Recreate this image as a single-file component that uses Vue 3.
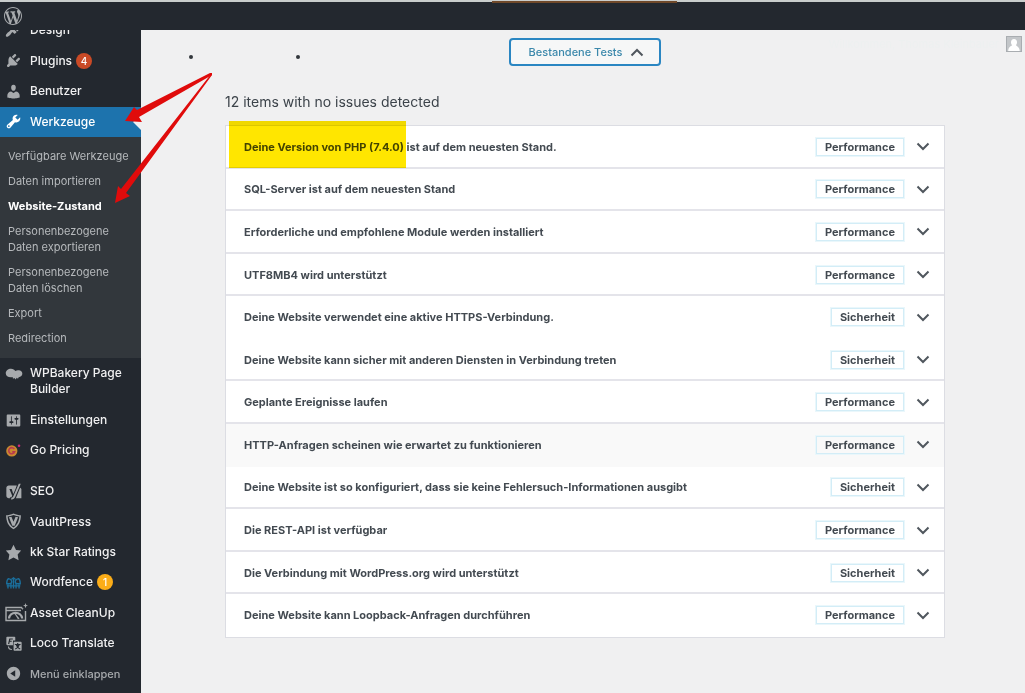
<template>
    <div class="admin">
        <header class="adminbar">
            <a href="#" class="wp-logo" aria-label="WordPress">
                <svg viewBox="0 0 20 20"><path :d="wpLogo" /></svg>
            </a>
        </header>

        <div class="body">
            <nav class="sidebar">
                <div class="menu">
                    <ul class="group group-core">
                        <li v-for="item in coreItems" :key="item.label" :class="{ current: item.current }">
                            <a href="#">
                                <svg class="icon" viewBox="0 0 20 20"><path :d="item.icon" /></svg>
                                <span>{{ item.label }}</span>
                                <span v-if="item.count" class="count">{{ item.count }}</span>
                            </a>
                        </li>
                    </ul>

                    <ul class="submenu">
                        <li v-for="entry in submenu" :key="entry">
                            <a href="#" :class="{ active: entry === 'Website-Zustand' }">{{ entry }}</a>
                        </li>
                    </ul>

                    <ul class="group group-settings">
                        <li class="two-lines">
                            <a href="#">
                                <svg class="icon wide" viewBox="0 0 20 20">
                                    <path d="M6.5 4.500C9 4.500 10.600 5.700 11.300 7.100 12.500 6.200 14 6.100 15.600 6.100c2.400 0 4.200 1.600 4.200 4s-1.800 4.100-4.300 4.200l-.8 1.900-1.500-1.200-1.300 2-1.400-1.600-1.700.8-.4-2c-.8.4-1.500.4-2.200.3C2.900 14.400.3 12.500.3 9.700.3 6.700 3 4.500 6.500 4.500z" />
                                </svg>
                                <span>WPBakery Page Builder</span>
                            </a>
                        </li>
                        <li>
                            <a href="#">
                                <svg class="icon" viewBox="0 0 20 20"><path :d="settingsIcon" /></svg>
                                <span>Einstellungen</span>
                            </a>
                        </li>
                        <li>
                            <a href="#">
                                <svg class="icon" viewBox="0 0 20 20">
                                    <circle cx="8" cy="10.500" r="6.600" fill="#c98a30" />
                                    <path d="M11 8.200A3.600 3.600 0 1 0 11.400 11.500H8.500" fill="none" stroke="#b83a4e" stroke-width="1.800" />
                                    <circle cx="16.500" cy="4.500" r="1.500" fill="#d0267a" />
                                </svg>
                                <span>Go Pricing</span>
                            </a>
                        </li>
                    </ul>

                    <ul class="group group-plugins">
                        <li>
                            <a href="#">
                                <svg class="icon wide" viewBox="0 0 20 20">
                                    <path d="M4 3h9.300L12 6.600 9.200 13 7.300 7H4.600l3.300 8c-.5 1.400-1.200 2-2.700 2v1H4c-1.700 0-3-1.300-3-3V6c0-1.700 1.300-3 3-3z" />
                                    <path d="M15.600 1h2.300L11.600 16c-.9 2.200-2.200 3.400-4.800 3.600v-2.200c1.500-.2 2.200-1 2.700-2.400z" />
                                    <path d="M17.200 5.500c.9.500 1.500 1.200 1.500 2.300V18H12.200z" />
                                </svg>
                                <span>SEO</span>
                            </a>
                        </li>
                        <li>
                            <a href="#">
                                <svg class="icon" viewBox="0 0 20 20">
                                    <path fill-rule="evenodd" d="M10 .5c3 1.500 6 2 8.700 2.100-.1 7-2.400 13-8.700 16.600C3.700 15.600 1.400 9.600 1.300 2.600 4 2.500 7 2 10 .5zM10 2.300C7.500 3.400 5.200 4 3.100 4.200 3.500 9.600 5.400 14.200 10 17.100c4.600-2.900 6.500-7.500 6.900-12.900C14.800 4 12.500 3.400 10 2.300z" />
                                    <path d="M4.600 5l3-.6L10 10.400l2.400-6 3 .6-4 10H8.600z" />
                                </svg>
                                <span>VaultPress</span>
                            </a>
                        </li>
                        <li>
                            <a href="#">
                                <svg class="icon" viewBox="0 0 20 20"><path d="M10 1l3 6 6 .75-4.120 4.620L16 19l-6-3-6 3 1.130-6.630L1 7.750 7 7z" /></svg>
                                <span>kk Star Ratings</span>
                            </a>
                        </li>
                        <li>
                            <a href="#">
                                <svg class="icon" viewBox="0 0 20 20">
                                    <g fill="none" stroke="#1b6f9c" stroke-width="1.600">
                                        <path d="M3.500 17V12M7 17V11M10 17V5M13 17V11M16.500 17V12" />
                                        <path d="M2 11.500c0-3 .5-5 2.200-6 2 .3 3.300 1.300 3.800 3 0 2-1.300 3-3 3zM18 11.500c0-3-.5-5-2.200-6-2 .3-3.300 1.300-3.800 3 0 2 1.300 3 3 3z" />
                                        <path d="M2 14h16M7.500 6.500L10 4.500l2.500 2" />
                                    </g>
                                </svg>
                                <span>Wordfence</span>
                                <span class="count warn">1</span>
                            </a>
                        </li>
                        <li>
                            <a href="#">
                                <svg class="icon gauge" viewBox="0 0 24 20">
                                    <path d="M18 4.500H2v13h19.500V8M2 7.500h15" fill="none" stroke="#a7aaad" stroke-width="1.400" />
                                    <path d="M5 15.500c.3-3.500 3-5.700 6.500-5.700s6.300 2.200 6.700 5.700" fill="none" stroke="#a7aaad" stroke-width="2.200" />
                                    <path d="M10 10l1 0 4.500 5.600-1.500.6z" />
                                    <path d="M21.500 0l.7 2 1.800.6-1.800.7-.7 2-.7-2-1.800-.7 1.800-.6zM18.300 4l.4 1.200 1.200.4-1.200.4-.4 1.200-.4-1.200-1.200-.4 1.200-.4z" />
                                </svg>
                                <span>Asset CleanUp</span>
                            </a>
                        </li>
                        <li>
                            <a href="#">
                                <svg class="icon wide" viewBox="0 0 20 20">
                                    <path fill-rule="evenodd" d="M2 2h8.500c.6 0 1 .4 1 1v3.500H8.800V12H2c-.6 0-1-.4-1-1V3c0-.6.4-1 1-1zM4.500 4L3 10.500h1.400L5 8h2.300V6.700h-2l.3-1.400h3V4z" />
                                    <path fill-rule="evenodd" d="M10.500 8H18c.6 0 1 .4 1 1v8.500c0 .6-.4 1-1 1h-7.500c-.6 0-1-.4-1-1V9c0-.6.400-1 1-1zm3.200 1.500v1.200H11v1.200h1.200c.3 1 .8 1.900 1.400 2.600-.7.600-1.500 1-2.500 1.400l.6 1.100c1.100-.4 2-1 2.700-1.700.7.700 1.600 1.300 2.600 1.700l.6-1.100c-.9-.3-1.700-.8-2.400-1.400.6-.7 1.100-1.600 1.400-2.600h1.100v-1.200H15V9.500z" />
                                    <path d="M3.500 13.500c0 2 1.500 3.500 4 3.500" fill="none" stroke="#a7aaad" stroke-width="1.300" />
                                </svg>
                                <span>Loco Translate</span>
                            </a>
                        </li>
                        <li>
                            <button type="button" class="collapse">
                                <svg class="icon" viewBox="0 0 20 20"><path d="M10 2.160c4.330 0 7.840 3.510 7.840 7.840s-3.510 7.840-7.840 7.840S2.160 14.330 2.160 10 5.710 2.160 10 2.160zm2 11.720V6.120L6.180 9.970z" /></svg>
                                <span>Menü einklappen</span>
                            </button>
                        </li>
                    </ul>
                </div>
            </nav>

            <main class="content">
                <div class="toolbar">
                    <ul class="dots"><li></li><li></li></ul>
                    <button type="button" class="passed">
                        Bestandene Tests
                        <svg viewBox="0 0 14 9"><path d="M1.500 7.500L7 2l5.500 5.500" /></svg>
                    </button>
                    <div class="user">
                        <span>Willkommen, Thomas Kleinbauer</span>
                        <svg viewBox="0 0 16 16">
                            <path d="M0 0h16v16H0z" fill="#a9adb1" />
                            <path d="M1 1h14v14H1z" fill="#c3c6c9" />
                            <path d="M8 3c2 0 3 1.400 3 3.200 0 1.300-.5 2.300-1.200 2.900.2.900 3.700 1.200 4 5.900H2.200c.3-4.700 3.800-5 4-5.900C5.500 8.500 5 7.500 5 6.200 5 4.400 6 3 8 3z" fill="#fff" />
                        </svg>
                    </div>
                </div>

                <section class="results">
                    <h2>12 items with no issues detected</h2>
                    <div class="accordion">
                        <button
                            v-for="test in tests"
                            :key="test.text"
                            type="button"
                            class="row"
                            :class="{ open: test.noLine, hover: test.hover }"
                        >
                            <span class="title"><mark v-if="test.mark">{{ test.mark }}</mark>{{ test.text }}</span>
                            <span class="badge">{{ test.badge }}</span>
                            <svg class="chevron" viewBox="0 0 14 9"><path d="M1.500 1.500L7 7l5.500-5.500" /></svg>
                        </button>
                    </div>
                </section>
            </main>
        </div>

        <svg class="arrows" viewBox="0 0 240 220" aria-hidden="true">
            <path d="M212 73L210 73 137 110 134 107 125 121 142 122 139 117 212 75z" />
            <path d="M212 73L211 74 121 189 118 186 115 203 130 196 126 193 212 75z" />
        </svg>
    </div>
</template>

<script setup>
const wpLogo = 'M20 10c0-5.510-4.490-10-10-10C4.480 0 0 4.490 0 10c0 5.520 4.480 10 10 10 5.510 0 10-4.480 10-10zM7.780 15.370L4.370 6.220c.55-.02 1.170-.08 1.170-.08.5-.06.44-1.130-.06-1.110 0 0-1.450.11-2.370.11-.18 0-.37 0-.58-.01C4.120 2.690 6.870 1.110 10 1.110c2.330 0 4.450.87 6.050 2.340-.68-.11-1.650.39-1.650 1.580 0 .74.45 1.360.9 2.100.35.61.55 1.360.55 2.460 0 1.490-1.400 5-1.400 5l-3.030-8.370c.54-.02.82-.17.82-.17.5-.05.44-1.250-.06-1.220 0 0-1.440.12-2.380.12-.87 0-2.330-.12-2.330-.12-.5-.03-.56 1.200-.06 1.220l.92.08 1.260 3.410zM17.410 10c.24-.64.74-1.870.43-4.250.7 1.290 1.050 2.710 1.050 4.250 0 3.290-1.730 6.240-4.400 7.780.97-2.590 1.940-5.200 2.920-7.780zM6.100 18.090C3.120 16.650 1.110 13.530 1.110 10c0-1.300.23-2.480.72-3.590C3.250 10.300 4.670 14.200 6.100 18.090zm4.030-6.630l2.580 6.980c-.86.29-1.760.45-2.710.45-.79 0-1.570-.11-2.290-.33.81-2.380 1.620-4.740 2.420-7.100z'

const settingsIcon = 'M18 16V4c0-.55-.45-1-1-1H3c-.55 0-1 .45-1 1v12c0 .55.45 1 1 1h14c.55 0 1-.45 1-1zM8 11h1c.55 0 1 .45 1 1s-.45 1-1 1H8v1.500c0 .28-.22.5-.5.5s-.5-.22-.5-.5V13H6c-.55 0-1-.45-1-1s.45-1 1-1h1V5.500c0-.28.22-.5.5-.5s.5.22.5.5V11zm5-2h-1c-.55 0-1-.45-1-1s.45-1 1-1h1V5.500c0-.28.22-.5.5-.5s.5.22.5.5V7h1c.55 0 1 .45 1 1s-.45 1-1 1h-1v5.500c0 .28-.22.5-.5.5s-.5-.22-.5-.5V9z'

const coreItems = [
    { label: 'Design', icon: 'M14.480 11.060L7.410 3.990l1.500-1.500c.5-.56 2.300-.47 3.510.32 1.210.8 1.430 1.280 2.910 2.100 1.180.64 2.450 1.260 4.450.85zm-.71.71L6.700 4.700 4.930 6.470c-.39.39-.39 1.020 0 1.410l1.060 1.060c.39.39.39 1.030 0 1.420-.6.6-1.430 1.110-2.210 1.690-.35.26-.7.53-1.010.84C1.430 14.230.4 16.080 1.400 17.070c.99 1 2.840-.03 4.180-1.360.31-.31.58-.66.85-1.020.57-.78 1.080-1.610 1.690-2.210.39-.39 1.020-.39 1.410 0l1.060 1.060c.39.39 1.020.39 1.410 0z' },
    { label: 'Plugins', count: 4, icon: 'M13.110 4.360L9.870 7.600 8 5.730l3.240-3.240c.35-.34 1.050-.2 1.560.32.52.51.66 1.210.31 1.550zm-8 1.770l.91-1.120 9.010 9.010-1.190.84c-.71.71-2.630 1.160-3.820 1.160H6.140L4.900 17.260c-.59.59-1.540.59-2.120 0-.59-.58-.59-1.530 0-2.120l1.240-1.240v-3.880c0-1.130.4-3.190 1.090-3.890zm7.260 3.970l3.240-3.240c.34-.35 1.040-.21 1.550.31.52.51.66 1.210.31 1.550l-3.240 3.250z' },
    { label: 'Benutzer', icon: 'M10 9.250c-2.270 0-2.730-3.440-2.730-3.440C7 4.020 7.820 2 9.970 2c2.160 0 2.980 2.020 2.710 3.810 0 0-.41 3.440-2.680 3.440zm0 2.570L12.720 10c2.390 0 4.520 2.330 4.520 4.530v2.490s-3.650 1.130-7.240 1.130c-3.650 0-7.240-1.130-7.240-1.130v-2.490c0-2.250 1.940-4.480 4.470-4.480z' },
    { label: 'Werkzeuge', current: true, icon: 'M16.680 9.770c-1.340 1.340-3.300 1.670-4.950.99l-5.410 6.520c-.99.99-2.590.99-3.580 0s-.99-2.590 0-3.570l6.520-5.420c-.68-1.650-.35-3.610.99-4.950 1.280-1.280 3.120-1.620 4.720-1.060l-2.890 2.890 2.820 2.820 2.860-2.870c.53 1.580.18 3.390-1.080 4.650zM3.810 16.210c.4.39 1.040.39 1.430 0 .4-.4.4-1.040 0-1.430-.39-.4-1.030-.4-1.430 0-.39.39-.39 1.030 0 1.430z' },
]

const submenu = [
    'Verfügbare Werkzeuge',
    'Daten importieren',
    'Website-Zustand',
    'Personenbezogene Daten exportieren',
    'Personenbezogene Daten löschen',
    'Export',
    'Redirection',
]

const tests = [
    { mark: 'Deine Version von PHP (7.4.0)', text: ' ist auf dem neuesten Stand.', badge: 'Performance' },
    { text: 'SQL-Server ist auf dem neuesten Stand', badge: 'Performance' },
    { text: 'Erforderliche und empfohlene Module werden installiert', badge: 'Performance' },
    { text: 'UTF8MB4 wird unterstützt', badge: 'Performance' },
    { text: 'Deine Website verwendet eine aktive HTTPS-Verbindung.', badge: 'Sicherheit', noLine: true },
    { text: 'Deine Website kann sicher mit anderen Diensten in Verbindung treten', badge: 'Sicherheit' },
    { text: 'Geplante Ereignisse laufen', badge: 'Performance' },
    { text: 'HTTP-Anfragen scheinen wie erwartet zu funktionieren', badge: 'Performance', noLine: true, hover: true },
    { text: 'Deine Website ist so konfiguriert, dass sie keine Fehlersuch-Informationen ausgibt', badge: 'Sicherheit' },
    { text: 'Die REST-API ist verfügbar', badge: 'Performance' },
    { text: 'Die Verbindung mit WordPress.org wird unterstützt', badge: 'Sicherheit' },
    { text: 'Deine Website kann Loopback-Anfragen durchführen', badge: 'Performance' },
]
</script>

<style>
body {
    background: #f0f0f1;
}
</style>

<style scoped>
.admin {
    position: relative;
    display: flex;
    flex-direction: column;
    height: 100vh;
    overflow: hidden;
    font-family: Inter, "Liberation Sans", sans-serif;
    font-size: 12px;
    color: #3c434a;
}

ul {
    list-style: none;
    margin: 0;
    padding: 0;
}

a {
    color: inherit;
    text-decoration: none;
}

button {
    font: inherit;
    color: inherit;
    cursor: pointer;
}

.adminbar {
    position: relative;
    display: flex;
    align-items: center;
    flex: none;
    height: 28px;
    padding-left: 4px;
    background: #23282f;
    border-top: 2px solid #c9cdcc;
}

/* Ladebalken am oberen Rand */
.adminbar::after {
    content: "";
    position: absolute;
    top: -1px;
    left: 48%;
    right: 34%;
    height: 2px;
    background: #70492a;
}

.wp-logo svg {
    display: block;
    width: 18px;
    height: 18px;
    fill: #a7aaad;
}

.body {
    display: flex;
    flex: 1;
    min-height: 0;
}

.sidebar {
    flex: none;
    width: 141px;
    overflow: hidden;
    background: #23282f;
    color: #f0f0f1;
    font-weight: 500;
}

.menu {
    margin-top: -15px;
}

.group {
    display: grid;
    grid-auto-rows: 1fr;
    line-height: 16px;
}

.group-core {
    min-height: 122px;
}

.group-settings {
    grid-auto-rows: auto;
    padding-bottom: 11px;
}

.group-plugins {
    min-height: 213px;
}

.group li {
    display: flex;
    position: relative;
    min-height: 30px;
}

.group .two-lines {
    min-height: 47px;
}

.group a,
.collapse {
    display: flex;
    align-items: center;
    gap: 8px;
    flex: 1;
    padding-left: 5px;
    padding-right: 12px;
}

.group .two-lines a {
    align-items: flex-start;
    padding-top: 7px;
}

.collapse {
    padding-top: 0;
    padding-bottom: 0;
    border: 0;
    background: none;
    color: #a7aaad;
    font-size: 11px;
    text-align: left;
}

.icon {
    flex: none;
    width: 17px;
    height: 17px;
    fill: #a7aaad;
}

.icon.wide {
    width: 18px;
    margin-right: -1px;
}

.icon.gauge {
    width: 24px;
    height: 20px;
    margin-left: -1px;
    margin-right: -6px;
}

.current {
    background: #1d73ad;
    color: #fff;
}

.current .icon {
    fill: #fff;
}

.current::after {
    content: "";
    position: absolute;
    top: 50%;
    right: 0;
    margin-top: -8px;
    border: 8px solid transparent;
    border-left-width: 0;
    border-right-color: #f0f0f1;
}

.count {
    width: 16px;
    margin-left: -4px;
    border-radius: 8px;
    background: #ca4a26;
    color: #fff;
    font-size: 10px;
    text-align: center;
}

.count.warn {
    background: #fbad18;
}

.submenu {
    padding: 6px 8px 8px;
    background: #32373c;
    color: #b7babd;
    font-size: 11px;
    line-height: 16px;
    font-weight: 400;
}

.submenu a {
    display: block;
    padding: 5px 0 4px;
}

.submenu .active {
    color: #fff;
    font-weight: 700;
}

.content {
    flex: 1;
    min-width: 0;
    padding-left: 4px;
    background: #f0f0f1;
}

.toolbar {
    display: grid;
    grid-template-columns: 1fr auto 1fr;
    align-items: center;
    padding-top: 8px;
}

.dots {
    display: flex;
    gap: 103px;
    padding-left: 44px;
}

.dots li {
    width: 4px;
    height: 4px;
    margin-top: 10px;
    border-radius: 50%;
    background: #32373c;
}

.passed {
    display: flex;
    align-items: center;
    gap: 8px;
    height: 28px;
    padding: 0 15px 0 18px;
    border: 2px solid #2a86c2;
    border-radius: 4px;
    background: #f6f7f7;
    color: #3b88ab;
    font-size: 11px;
    font-weight: 500;
}

.passed svg {
    width: 14px;
    height: 9px;
    fill: none;
    stroke: #50575e;
    stroke-width: 2;
}

.user {
    display: flex;
    justify-content: flex-end;
    align-items: center;
    gap: 7px;
    padding-right: 3px;
    margin-top: -16px;
    color: #edf0f0;
    font-size: 11px;
}

.user span {
    white-space: nowrap;
}

.user svg {
    flex: none;
    width: 16px;
    height: 16px;
}

.results {
    max-width: 720px;
    margin: 0 auto;
}

h2 {
    margin: 0;
    padding: 26px 0 13px;
    font-size: 14px;
    line-height: 20px;
    font-weight: 400;
}

.accordion {
    display: grid;
    grid-auto-rows: 1fr;
    min-height: 511px;
    border: 1px solid #dcdde3;
    background: #fff;
}

.row {
    display: flex;
    align-items: center;
    gap: 12px;
    padding: 1px 14px 0 18px;
    border: 0;
    border-bottom: 2px solid #e4e4ea;
    background: #fff;
    color: #434a51;
    font-size: 11px;
    line-height: 16px;
    font-weight: 700;
    text-align: left;
}

.row:last-child,
.row.open {
    border-bottom-color: transparent;
}

.row.hover {
    background: #f9f9f9;
}

.title {
    flex: 1;
}

mark {
    position: relative;
    background: none;
    color: inherit;
}

mark::before {
    content: "";
    position: absolute;
    top: -19px;
    right: -2px;
    bottom: -14px;
    left: -15px;
    background: #ffe600;
    mix-blend-mode: multiply;
}

.badge {
    padding: 0 8px;
    border: 1px solid #d3edf7;
    outline: 1px solid #eaf7fb;
}

.chevron {
    flex: none;
    width: 14px;
    height: 9px;
    fill: none;
    stroke: #50575e;
    stroke-width: 2;
}

.arrows {
    position: absolute;
    top: 0;
    left: 0;
    width: 240px;
    height: 220px;
    fill: #e00b0b;
    pointer-events: none;
}
</style>
